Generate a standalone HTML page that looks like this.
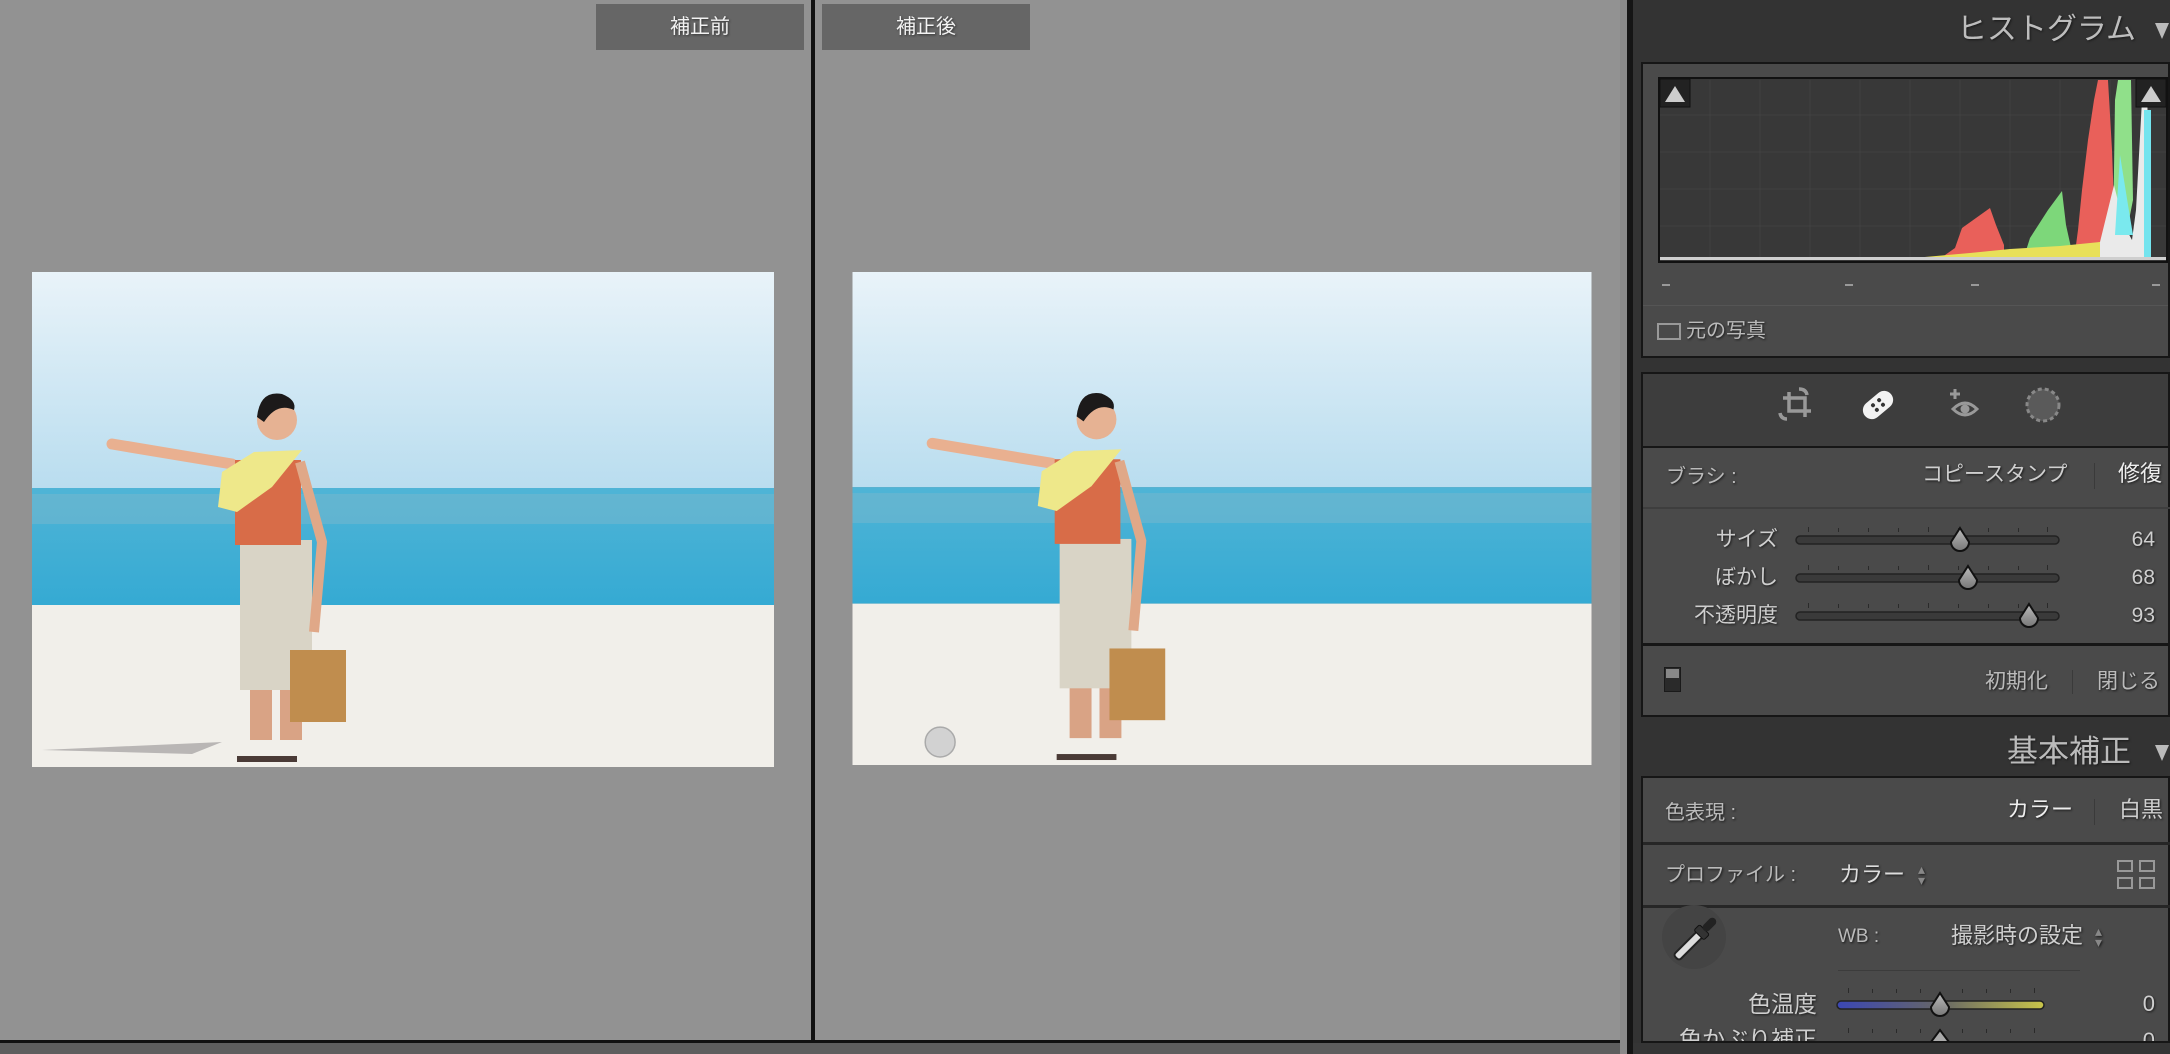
<!DOCTYPE html>
<html><head><meta charset="utf-8"><style>
*{margin:0;padding:0;box-sizing:border-box}
body{width:2170px;height:1054px;overflow:hidden;background:#929292;position:relative;font-family:"Liberation Sans","Noto Sans CJK JP",sans-serif}
.a{position:absolute}
.t{color:#cfcfcf;text-shadow:1px 1px 2px #1a1a1a;white-space:nowrap;line-height:1}
.lbl{background:#666;color:#f2f2f2;font-size:20px;text-align:center;line-height:46px;text-shadow:1px 1px 2px #333}
.sep{width:1px;background:#3a3a3a}
</style></head><body>
<div class="a" style="left:811px;top:0;width:4px;height:1043px;background:#111"></div>
<div class="a lbl" style="left:596px;top:4px;width:208px;height:46px">補正前</div>
<div class="a lbl" style="left:822px;top:4px;width:208px;height:46px">補正後</div>
<div class="a" style="left:0;top:1040px;width:1627px;height:3px;background:#111"></div>
<div class="a" style="left:0;top:1043px;width:1627px;height:11px;background:#5e5e5e"></div>

<svg class="a" style="left:32px;top:272px" width="742" height="495" viewBox="0 0 742 495">
<defs><linearGradient id="sky" x1="0" y1="0" x2="0" y2="1"><stop offset="0" stop-color="#e9f3f9"/><stop offset="1" stop-color="#b9ddef"/></linearGradient>
<linearGradient id="sea" x1="0" y1="0" x2="0" y2="1"><stop offset="0" stop-color="#4fb4d6"/><stop offset="1" stop-color="#35aad3"/></linearGradient></defs>
<g id="photo">
<rect width="742" height="216" fill="url(#sky)"/>
<rect y="216" width="742" height="117" fill="url(#sea)"/>
<rect y="222" width="742" height="30" fill="#7fb7cc" opacity=".45"/>
<rect y="333" width="742" height="162" fill="#f1efea"/>
<path d="M80,172 L200,192" stroke="#e9b090" stroke-width="11" stroke-linecap="round"/>
<rect x="218" y="278" width="22" height="190" fill="#d9a385"/>
<rect x="248" y="278" width="22" height="190" fill="#d9a385"/>
<rect x="208" y="268" width="72" height="150" fill="#d9d4c6"/>
<rect x="203" y="188" width="66" height="85" fill="#d86c48"/>
<path d="M190,200 L222,180 L270,178 L240,215 L205,240 L186,235 Z" fill="#eee88a"/>
<path d="M268,190 L290,270 L282,360" stroke="#e0a888" stroke-width="10" fill="none"/>
<rect x="258" y="378" width="56" height="72" fill="#c08d4e"/>
<circle cx="245" cy="148" r="20" fill="#e6b293"/>
<path d="M225,145 Q228,118 250,122 Q265,128 262,138 Q245,130 232,150 Z" fill="#1c1a1a"/>
<rect x="205" y="484" width="60" height="6" fill="#4a3a36"/>
</g>
<path d="M10,478 L190,470 L160,482 Z" fill="#b9b6b5"/>
</svg>
<svg class="a" style="left:852px;top:272px" width="740" height="493" viewBox="0 0 742 495">
<use href="#photo"/>
<circle cx="88" cy="472" r="15" fill="#d2d2d2" stroke="#aaa" stroke-width="1.5"/>
</svg>

<!-- right panel -->
<div class="a" style="left:1620px;top:0;width:7px;height:1054px;background:#8a8a8a"></div>
<div class="a" style="left:1627px;top:0;width:6px;height:1054px;background:#151515"></div>
<div class="a" style="left:1633px;top:0;width:537px;height:1054px;background:#333"></div>
<div class="a t" style="right:34px;top:15px;font-size:30px;color:#bdbdbd">ヒストグラム</div>
<div class="a" style="left:2155px;top:23px;width:0;height:0;border-left:7px solid transparent;border-right:7px solid transparent;border-top:16px solid #bbb"></div>

<div class="a" style="left:1641px;top:62px;width:529px;height:296px;background:#4a4a4a;border:2px solid #161616"></div>
<svg class="a" style="left:1656px;top:76px" width="514" height="190" viewBox="1656 76 514 190">
<rect x="1659" y="78" width="508" height="184" fill="#383838" stroke="#111" stroke-width="2"/>
<g stroke="#414141" stroke-width="1">
<path d="M1710,80V260M1760,80V260M1810,80V260M1860,80V260M1910,80V260M1960,80V260M2010,80V260M2060,80V260M2110,80V260"/>
<path d="M1660,115H2166M1660,152H2166M1660,189H2166M1660,226H2166"/>
</g>
<path d="M1938,260 L1955,248 L1962,228 L1976,218 L1990,208 L1996,225 L2004,245 L2004,260Z" fill="#e9605a"/>
<path d="M2023,260 L2030,238 L2048,210 L2062,191 L2066,225 L2072,252 L2072,260Z" fill="#7dd77a"/>
<path d="M2074,260 L2078,230 L2082,190 L2088,140 L2094,100 L2098,80 L2108,80 L2112,150 L2116,260Z" fill="#e9605a"/>
<path d="M2113,240 L2115,100 L2118,80 L2131,80 L2133,200 L2126,235Z" fill="#90e08a"/>
<path d="M1890,260 L2060,254 L2100,242 L2114,185 L2124,225 L2132,240 L2136,210 L2142,100 L2147,80 L2150,260Z" fill="#eaeaea"/>
<path d="M2115,235 L2120,155 L2128,205 L2133,235 Z" fill="#7ae9ee"/>
<path d="M2144,110 L2151,110 L2151,260 L2144,260Z" fill="#74e4ee"/>
<path d="M1890,260 L1970,253 L2010,249 L2060,246 L2100,242 L2100,260Z" fill="#e8e05a"/>
<rect x="1660" y="257" width="506" height="3" fill="#cfcfcf"/>
<rect x="1660" y="79" width="30" height="28" fill="#222" stroke="#111"/>
<path d="M1665,102 L1675,86 L1685,102Z" fill="#ccc"/>
<rect x="2136" y="79" width="30" height="28" fill="#222" stroke="#111"/>
<path d="M2141,102 L2151,86 L2161,102Z" fill="#ccc"/>
</svg>
<div class="a" style="top:284px;left:1662px;width:8px;height:2px;background:#999"></div>
<div class="a" style="top:284px;left:1845px;width:8px;height:2px;background:#999"></div>
<div class="a" style="top:284px;left:1971px;width:8px;height:2px;background:#999"></div>
<div class="a" style="top:284px;left:2152px;width:8px;height:2px;background:#999"></div>
<div class="a" style="left:1643px;top:305px;width:525px;height:1px;background:#555"></div>
<div class="a" style="left:1657px;top:323px;width:24px;height:17px;border:2px solid #999"></div>
<div class="a t" style="left:1686px;top:321px;font-size:20px;color:#bbb">元の写真</div>

<div class="a" style="left:1641px;top:372px;width:529px;height:74px;background:#3d3d3d;border:2px solid #161616;border-bottom:none"></div>
<svg class="a" style="left:1775px;top:383px" width="290" height="45" viewBox="0 0 290 45">
<g fill="none" stroke="#999" stroke-width="3.5">
<path d="M8,15 H30 V34 M14,9 V28 H36"/>
<path d="M24,6 Q31,6 32,12 M12,36 Q6,36 5,30"/>
</g>
<g transform="translate(103,22) rotate(-40)"><rect x="-17" y="-9" width="34" height="18" rx="9" fill="#f2f2f2"/><circle cx="-4" cy="-3" r="2" fill="#333"/><circle cx="4" cy="-3" r="2" fill="#333"/><circle cx="-4" cy="3" r="2" fill="#333"/><circle cx="4" cy="3" r="2" fill="#333"/></g>
<g fill="none" stroke="#999" stroke-width="3"><path d="M180,6 V16 M175,11 H185"/><path d="M178,26 Q190,14 202,26 Q190,38 178,26Z"/></g>
<circle cx="190" cy="26" r="4.5" fill="#999"/>
<circle cx="268" cy="22" r="16" fill="#5a5a5a" stroke="#888" stroke-width="3" stroke-dasharray="4 3"/>
</svg>

<div class="a" style="left:1641px;top:446px;width:529px;height:271px;background:#4a4a4a;border:2px solid #161616"></div>
<div class="a" style="left:1643px;top:507px;width:527px;height:2px;background:#3e3e3e"></div>
<div class="a t" style="left:1666px;top:467px;font-size:20px;color:#bbb">ブラシ :</div>
<div class="a t" style="left:1922px;top:464px;font-size:21px">コピースタンプ</div>
<div class="a sep" style="left:2094px;top:463px;height:26px"></div>
<div class="a t" style="left:2118px;top:463px;font-size:22px;color:#eee">修復</div>

<div class="a t" style="right:392px;top:529px;font-size:21px">サイズ</div>
<div class="a t" style="right:392px;top:567px;font-size:21px">ぼかし</div>
<div class="a t" style="right:392px;top:605px;font-size:21px">不透明度</div>
<div class="a t" style="right:15px;top:529px;font-size:21px">64</div>
<div class="a t" style="right:15px;top:567px;font-size:21px">68</div>
<div class="a t" style="right:15px;top:605px;font-size:21px">93</div>

<svg class="a" style="left:1780px;top:520px" width="290" height="110" viewBox="1780 520 290 110">
<defs><linearGradient id="th" x1="0" y1="0" x2="0" y2="1"><stop offset="0" stop-color="#bbb"/><stop offset="1" stop-color="#777"/></linearGradient>
<linearGradient id="wb" x1="0" x2="1"><stop offset="0" stop-color="#3b47b5"/><stop offset=".5" stop-color="#666"/><stop offset="1" stop-color="#c9c54a"/></linearGradient></defs>
<g fill="#2a2a2a">
<g id="tk"><rect x="1808" y="527" width="1" height="5"/><rect x="1838" y="528" width="1" height="4"/><rect x="1868" y="528" width="1" height="4"/><rect x="1898" y="528" width="1" height="4"/><rect x="1928" y="527" width="1" height="5"/><rect x="1958" y="528" width="1" height="4"/><rect x="1988" y="528" width="1" height="4"/><rect x="2018" y="528" width="1" height="4"/><rect x="2047" y="527" width="1" height="5"/></g>
<use href="#tk" y="38"/><use href="#tk" y="76"/>
</g>
<g fill="#3a3a3a" stroke="#222" stroke-width="1.5">
<rect x="1796" y="536" width="263" height="8" rx="4"/>
<rect x="1796" y="574" width="263" height="8" rx="4"/>
<rect x="1796" y="612" width="263" height="8" rx="4"/>
</g>
<g fill="url(#th)" stroke="#111" stroke-width="2">
<path d="M0,-12 L9,2 A9,9 0 1 1 -9,2 Z" transform="translate(1960,540)"/>
<path d="M0,-12 L9,2 A9,9 0 1 1 -9,2 Z" transform="translate(1968,578)"/>
<path d="M0,-12 L9,2 A9,9 0 1 1 -9,2 Z" transform="translate(2029,616)"/>
</g>
</svg>
<div class="a" style="left:1643px;top:643px;width:527px;height:3px;background:#161616"></div>
<div class="a" style="left:1664px;top:667px;width:17px;height:25px;background:#2a2a2a;border:1px solid #1a1a1a"></div>
<div class="a" style="left:1666px;top:669px;width:13px;height:9px;background:#888"></div>
<div class="a t" style="left:1985px;top:671px;font-size:21px;color:#bbb">初期化</div>
<div class="a sep" style="left:2072px;top:670px;height:24px"></div>
<div class="a t" style="left:2097px;top:671px;font-size:21px;color:#bbb">閉じる</div>

<div class="a t" style="left:2007px;top:736px;font-size:31px;color:#bbb">基本補正</div>
<div class="a" style="left:2155px;top:745px;width:0;height:0;border-left:7px solid transparent;border-right:7px solid transparent;border-top:16px solid #bbb"></div>

<div class="a" style="left:1641px;top:776px;width:529px;height:267px;background:#4a4a4a;border:2px solid #161616"></div>
<div class="a" style="left:1643px;top:842px;width:527px;height:3px;background:#262626"></div>
<div class="a" style="left:1643px;top:905px;width:527px;height:3px;background:#262626"></div>
<div class="a t" style="left:1665px;top:803px;font-size:20px;color:#bbb">色表現 :</div>
<div class="a t" style="left:2007px;top:799px;font-size:22px;color:#eee">カラー</div>
<div class="a sep" style="left:2094px;top:799px;height:26px"></div>
<div class="a t" style="left:2119px;top:799px;font-size:22px">白黒</div>

<div class="a t" style="left:1665px;top:865px;font-size:20px;color:#bbb">プロファイル :</div>
<div class="a t" style="left:1839px;top:864px;font-size:22px;color:#ddd">カラー</div>
<div class="a t" style="left:1918px;top:864px;font-size:14px;color:#888;line-height:11px">▴<br>▾</div>
<svg class="a" style="left:2116px;top:858px" width="42" height="34"><g fill="none" stroke="#999" stroke-width="2"><rect x="2" y="3" width="14" height="10"/><rect x="24" y="3" width="14" height="10"/><rect x="2" y="20" width="14" height="10"/><rect x="24" y="20" width="14" height="10"/></g></svg>

<div class="a" style="left:1662px;top:905px;width:64px;height:64px;border-radius:50%;background:#444"></div>
<svg class="a" style="left:1658px;top:902px" width="72" height="72"><g transform="translate(38,36) rotate(45)"><rect x="-4" y="-6" width="8" height="34" rx="3" fill="#ddd" stroke="#222" stroke-width="2"/><rect x="-7" y="-12" width="14" height="8" rx="2" fill="#333" stroke="#111"/><rect x="-4" y="-27" width="8" height="16" rx="4" fill="#222"/></g></svg>
<div class="a t" style="left:1838px;top:927px;font-size:19px;color:#bbb">WB :</div>
<div class="a t" style="left:1951px;top:925px;font-size:22px">撮影時の設定</div>
<div class="a t" style="left:2095px;top:926px;font-size:14px;color:#888;line-height:11px">▴<br>▾</div>
<div class="a" style="left:1838px;top:970px;width:242px;height:1px;background:#3c3c3c"></div>
<div class="a t" style="right:353px;top:993px;font-size:23px">色温度</div>
<div class="a t" style="right:15px;top:993px;font-size:22px">0</div>
<div class="a t" style="right:353px;top:1028px;font-size:23px;height:13px;overflow:hidden">色かぶり補正</div>
<div class="a t" style="right:15px;top:1030px;font-size:22px;height:11px;overflow:hidden">0</div>
<svg class="a" style="left:1825px;top:980px" width="230" height="62" viewBox="1825 980 230 62">
<g fill="#2a2a2a"><g id="tk2"><rect x="1848" y="988" width="1" height="5"/><rect x="1872" y="989" width="1" height="4"/><rect x="1896" y="989" width="1" height="4"/><rect x="1920" y="989" width="1" height="4"/><rect x="1962" y="989" width="1" height="4"/><rect x="1986" y="989" width="1" height="4"/><rect x="2010" y="989" width="1" height="4"/><rect x="2034" y="988" width="1" height="5"/></g><use href="#tk2" y="40"/></g>
<rect x="1837" y="1001" width="207" height="8" rx="4" fill="url(#wb)" stroke="#222" stroke-width="1.5"/>
<path d="M0,-12 L9,2 A9,9 0 1 1 -9,2 Z" transform="translate(1940,1005)" fill="url(#th)" stroke="#111" stroke-width="2"/>
<path d="M1931,1042 L1940,1030 L1949,1042Z" fill="#aaa" stroke="#111" stroke-width="2"/>
</svg>
<div class="a" style="left:1633px;top:1043px;width:537px;height:11px;background:#353535"></div>
</body></html>
